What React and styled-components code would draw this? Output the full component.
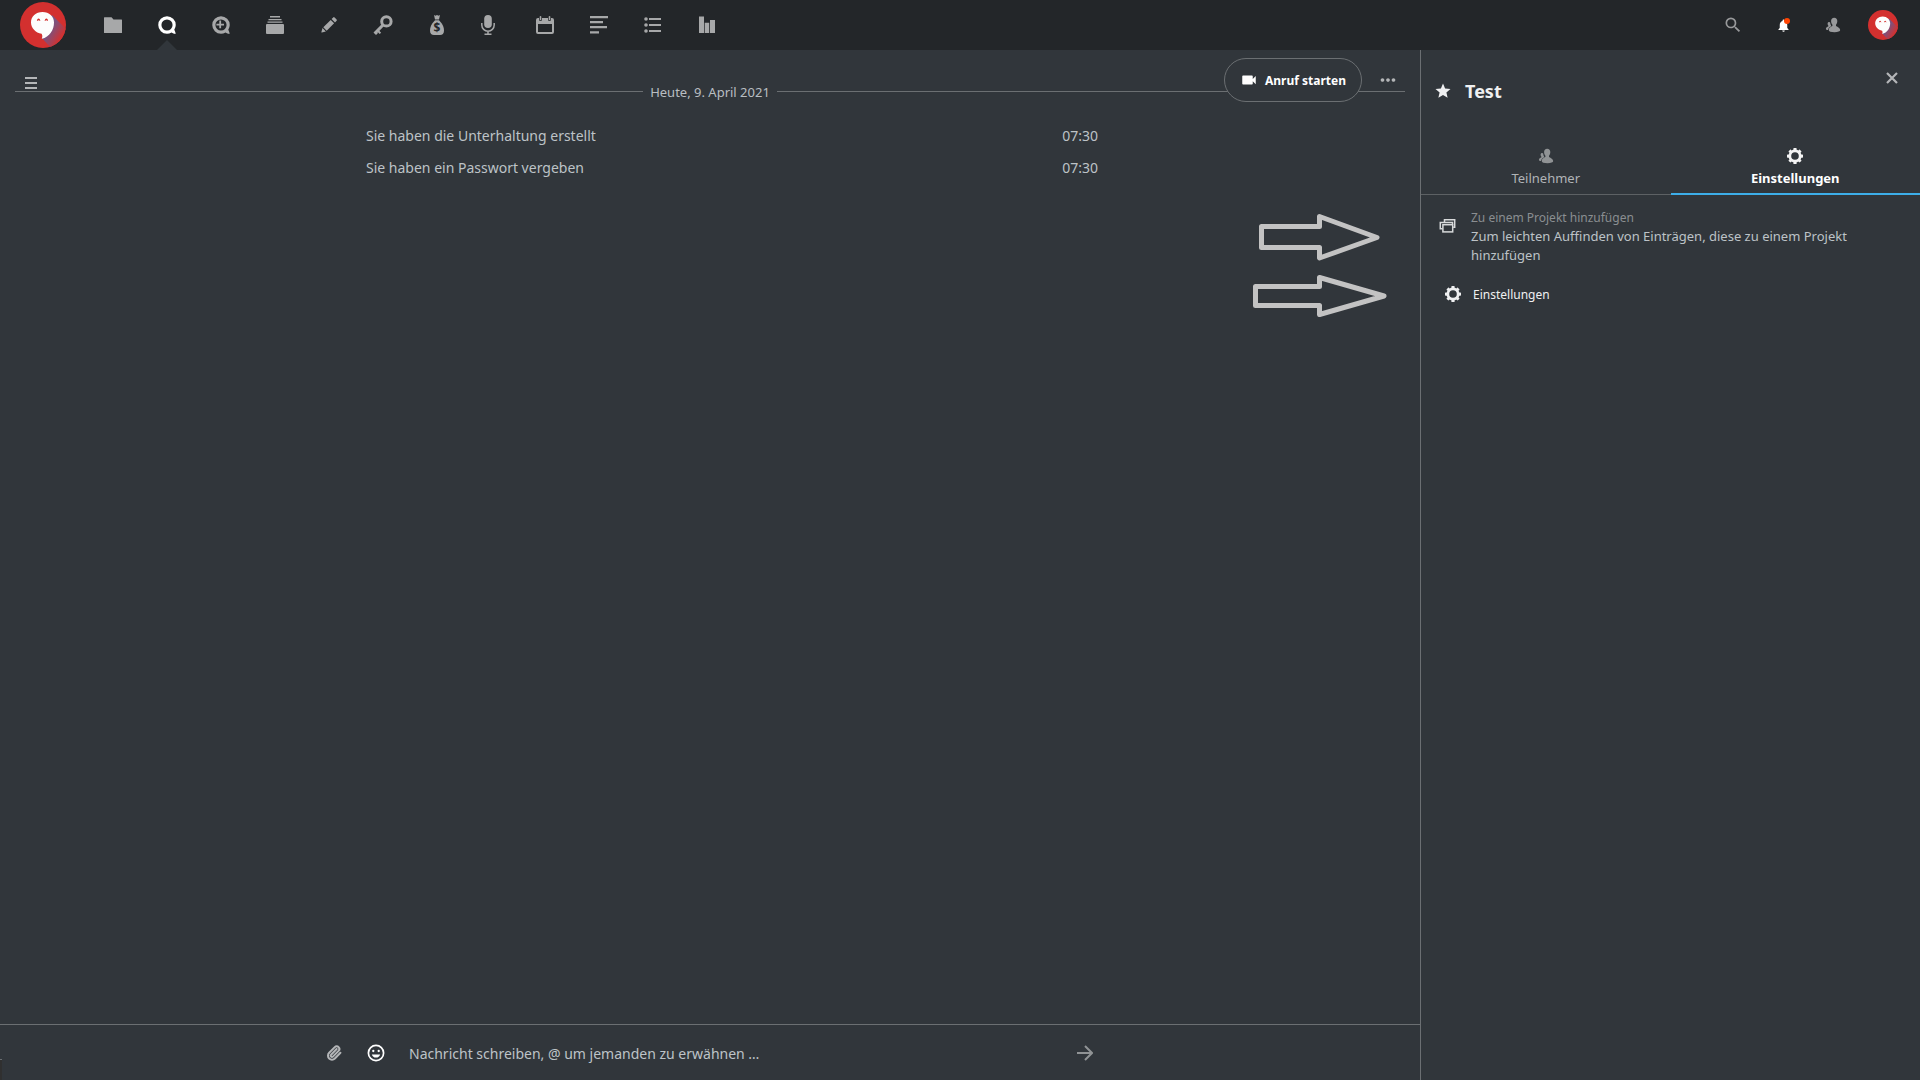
import React from 'react';
import styled, { createGlobalStyle } from 'styled-components';
import {
  MdSearch,
  MdNotifications,
  MdVideocam,
  MdMoreHoriz,
  MdStar
} from 'react-icons/md';
import { Paperclip } from 'lucide-react';

const GlobalStyle = createGlobalStyle`
  * {
    box-sizing: border-box;
  }

  body {
    margin: 0;
    background: #31363b;
    color: #bdc3c7;
    font-family: "Noto Sans", "Open Sans", sans-serif;
    font-size: 14px;
  }

  button, input {
    font-family: inherit;
    color: inherit;
  }
`

const Page = styled.div`
  display: flex;
  flex-direction: column;
  height: 100vh;
`

const Header = styled.header`
  display: flex;
  align-items: center;
  flex-shrink: 0;
  height: 50px;
  padding: 0 12px 0 20px;
  background: #232629;
`

const LogoLink = styled.a`
  display: flex;
  margin-right: 20px;
`

const Nav = styled.nav`
  display: flex;
  flex: 1;
`

const NavLink = styled.a`
  position: relative;
  display: flex;
  align-items: center;
  justify-content: center;
  width: 54px;
  height: 50px;
  color: ${props => props.$active ? '#ffffff' : '#a7a8a9'};

  &::after {
    content: '';
    display: ${props => props.$active ? 'block' : 'none'};
    position: absolute;
    left: 17px;
    bottom: 0;
    border: 10px solid transparent;
    border-top-width: 0;
    border-bottom-color: #31363b;
  }
`

const HeaderButton = styled.button`
  position: relative;
  display: flex;
  align-items: center;
  justify-content: center;
  width: 50px;
  height: 50px;
  padding: 0;
  border: 0;
  background: none;
  color: ${props => props.$bright ? '#ffffff' : '#98999b'};
`

const Badge = styled.span`
  position: absolute;
  top: 18px;
  right: 18px;
  width: 6px;
  height: 6px;
  border-radius: 50%;
  background: #ff4402;
`

const Body = styled.div`
  display: flex;
  flex: 1;
  min-height: 0;
`

const Main = styled.main`
  position: relative;
  display: flex;
  flex-direction: column;
  flex: 1;
  min-width: 0;
`

const TopBar = styled.div`
  position: absolute;
  top: 8px;
  left: 8px;
  right: 10px;
  display: flex;
  align-items: flex-start;
`

const IconButton = styled.button`
  display: flex;
  align-items: center;
  justify-content: center;
  width: 44px;
  height: 44px;
  padding: 0;
  border: 0;
  background: none;
  color: ${props => props.$bright ? '#ffffff' : '#b4b6b8'};
`

const MenuButton = styled(IconButton)`
  width: 46px;
  height: 50px;
  margin-right: auto;
`

const ToolButton = styled(IconButton)`
  width: 42px;
`

const CallButton = styled.button`
  display: flex;
  align-items: center;
  gap: 7px;
  height: 44px;
  margin-right: 4px;
  padding: 0 15px;
  border: 1px solid #6b6f72;
  border-radius: 22px;
  background: #31363b;
  color: #ffffff;
  font-size: 12px;
  font-weight: 700;
  white-space: nowrap;
`

const Messages = styled.div`
  flex: 1;
  padding: 32px 15px 0;
`

const DateDivider = styled.div`
  display: flex;
  gap: 7px;
  margin-bottom: 18px;
  font-size: 13px;
  line-height: 20px;
  color: #b9bec2;

  &::before,
  &::after {
    content: '';
    flex: 1;
    height: 9px;
    border-bottom: 1px solid #6b6f72;
  }
`

const MessageList = styled.ul`
  max-width: 800px;
  margin: 0 auto;
  padding: 0 12px 0 56px;
  list-style: none;
`

const Message = styled.li`
  display: flex;
  justify-content: space-between;
  line-height: 20px;
  padding: 6px 0;
`

const Arrows = styled.svg`
  position: absolute;
  top: 160px;
  right: 30px;
`

const Composer = styled.form`
  flex-shrink: 0;
  height: 56px;
  border-top: 1px solid #6b6f72;
`

const ComposerRow = styled.div`
  display: flex;
  align-items: center;
  max-width: 800px;
  height: 56px;
  margin: 0 auto;
  padding: 0 3px;
`

const MessageInput = styled.input`
  flex: 1;
  height: 44px;
  padding: 0 12px;
  border: 0;
  background: none;
  font-size: 14px;

  &::placeholder {
    color: #bdc3c7;
    opacity: 1;
  }
`

const StatusEdge = styled.span`
  position: absolute;
  left: 0;
  bottom: 0;
  width: 2px;
  height: 21px;
  border-top: 1px solid #6b6f72;
  background: #303030;
`

const Sidebar = styled.aside`
  width: 27vw;
  max-width: 500px;
  border-left: 1px solid #6b6f72;
`

const SidebarHeader = styled.div`
  display: flex;
  height: 84px;
  padding: 6px 6px 0 0;
`

const TitleRow = styled.div`
  display: flex;
  align-items: center;
  flex: 1;
  gap: 13px;
  height: 70px;
  padding-left: 13px;
  color: #eff0f1;
`

const Title = styled.h2`
  margin: 0;
  font-size: 18px;
  line-height: 24px;
`

const Tabs = styled.div`
  display: flex;
  height: 61px;
  border-bottom: 1px solid #5d6164;
`

const Tab = styled.button`
  display: flex;
  flex-direction: column;
  align-items: center;
  flex: 1;
  gap: 4px;
  height: 61px;
  padding: 14px 0 0;
  border: 0;
  border-bottom: 2px solid ${props => props.$active ? '#3daee9' : 'transparent'};
  background: none;
  color: ${props => props.$active ? '#ffffff' : '#b0b4b7'};
  font-size: 13px;
  font-weight: ${props => props.$active ? 700 : 400};
  line-height: 20px;

  svg {
    color: ${props => props.$active ? '#f4f4f4' : '#909395'};
  }
`

const Project = styled.section`
  display: flex;
  gap: 15px;
  padding: 14px 60px 0 18px;
  font-size: 13px;
  line-height: 19px;

  svg {
    flex-shrink: 0;
    margin-top: 9px;
  }
`

const ProjectTitle = styled.div`
  font-size: 12px;
  line-height: 18px;
  color: #8a8e91;
`

const ProjectText = styled.p`
  margin: 0;
`

const SettingsButton = styled.button`
  display: flex;
  align-items: center;
  gap: 12px;
  height: 44px;
  margin: 7px 0 0 24px;
  padding: 0;
  border: 0;
  background: none;
  color: #eff0f1;
  font-size: 12px;
`

const Icon = ({ size = 20, box = 20, children }) => (
  <svg width={size} height={size} viewBox={`0 0 ${box} ${box}`} fill="currentColor" aria-hidden="true">
    {children}
  </svg>
)

const TALK_PATH = 'M8 .999a6.993 6.993 0 0 0-7 6.993 6.993 6.993 0 0 0 7 6.994 6.951 6.951 0 0 0 3.612-1.02c.936.525 2.883 1.4 3.223 1.059.348-.348-.632-2.38-1.007-3.302A6.958 6.958 0 0 0 15 7.992 6.993 6.993 0 0 0 8 .999M8 3.53a4.46 4.46 0 0 1 4.462 4.462A4.46 4.46 0 1 1 8 3.53z'

const GearIcon = () => (
  <Icon size={16} box={16}>
    <path fillRule="evenodd" d="m6.938 0c-.313 0-.563.25-.563.563v1.187c-.625.156-1.156.406-1.688.75l-.812-.813c-.188-.187-.563-.187-.75 0l-1.438 1.438c-.187.187-.187.562 0 .75l.813.812c-.344.532-.594 1.063-.75 1.688h-1.187c-.313 0-.563.25-.563.563v2.124c0 .313.25.563.563.563h1.187c.156.625.406 1.156.75 1.688l-.813.812c-.187.188-.187.563 0 .75l1.438 1.438c.187.187.562.187.75 0l.812-.813c.532.344 1.063.594 1.688.75v1.187c0 .313.25.563.563.563h2.124c.313 0 .563-.25.563-.563v-1.187c.625-.156 1.156-.406 1.688-.75l.812.813c.188.187.563.187.75 0l1.438-1.438c.187-.187.187-.562 0-.75l-.813-.812c.344-.532.594-1.063.75-1.688h1.187c.313 0 .563-.25.563-.563v-2.124c0-.313-.25-.563-.563-.563h-1.187c-.156-.625-.406-1.156-.75-1.688l.813-.812c.187-.188.187-.563 0-.75l-1.438-1.438c-.187-.187-.562-.187-.75 0l-.812.813c-.532-.344-1.063-.594-1.688-.75v-1.187c0-.313-.25-.563-.563-.563zm1.062 4.200a3.800 3.800 0 1 1 0 7.600 3.800 3.800 0 0 1 0-7.600z" />
  </Icon>
)

const ContactsIcon = () => (
  <Icon size={16} box={16}>
    <path d="M9.200.8C7.200.8 6.100 2.200 6.100 4c0 1.600.6 2.900 1.300 3.700V9C5.800 9.600 3.700 10.900 3.700 13c0 1.500 2.300 2.200 5.800 2.200s5.700-.7 5.700-2.100c0-2-2.400-3.200-4.200-4.100V7.700c.7-.8 1.300-2.100 1.300-3.700 0-1.800-1.100-3.200-3.100-3.200z" />
    <path d="M4.200 5c-1 0-1.600.7-1.600 1.700 0 .8.200 1.400.7 1.900v.9C2.200 9.900.9 10.500.9 11.800c0 .8.700 1.200 2 1.300.3-1.800 1.600-3 3.200-3.900V8.600c-.5-.8-.8-1.700-.9-2.900-.2-.5-.5-.7-1-.7z" />
  </Icon>
)

const CollectionIcon = () => (
  <Icon size={17} box={17}>
    <g fill="none" stroke="#d8dadb" strokeWidth="1.500">
      <path d="M5.500 4.500V1.800h10.200v7.500h-1.500" />
      <path d="M3.500 10.700H1.300V4.400h12.200v2" />
      <rect x="3.900" y="6.700" width="9.800" height="7.200" />
    </g>
  </Icon>
)

// white balloon with a long shadow running to the lower right
const Logo = ({ size }) => (
  <svg width={size} height={size} viewBox="0 0 46 46" role="img" aria-label="Logo">
    <defs>
      <linearGradient id={`shadow${size}`} x1="0.2" y1="0.2" x2="0.8" y2="0.7">
        <stop offset="0" stopColor="#6a5c8e" />
        <stop offset="0.4" stopColor="#80507a" />
        <stop offset="1" stopColor="#d3302f" />
      </linearGradient>
      <clipPath id={`round${size}`}>
        <circle cx="23" cy="23" r="23" />
      </clipPath>
    </defs>
    <g clipPath={`url(#round${size})`}>
      <rect width="46" height="46" fill="#d3302f" />
      <path d="M32 13l14 14v19H31l-9-10z" fill={`url(#shadow${size})`} />
      <path d="M22.500 10C15.800 10 11 14.500 11 20.500c0 5.500 4.600 10.300 10.600 11.300.9 1.500 1 3 .2 5C29.500 35 34 28 34 20.500 34 14.500 29.200 10 22.500 10z" fill="#fdfdfd" />
      <path d="M16.900 19c0-1.500.8-2.600 1.700-2.600s1.700 1.100 1.700 2.600l-1.700-.8z" fill="#d3302f" />
      <path d="M24.700 19c0-1.500.8-2.600 1.700-2.600s1.700 1.100 1.700 2.600l-1.700-.8z" fill="#d3302f" />
    </g>
  </svg>
)

const apps = [
  {
    name: 'Dateien',
    icon: <path d="M2 2.300h6.500l2 2.300h8a.5.5 0 0 1 .5.500V17.500a.5.5 0 0 1-.5.500h-17a.5.5 0 0 1-.5-.5V2.800a.5.5 0 0 1 .5-.5z" />
  },
  {
    name: 'Talk',
    active: true,
    icon: <path transform="scale(1.250)" d={TALK_PATH} />
  },
  {
    name: 'Talk erweitert',
    icon: (
      <g>
        <path transform="scale(1.250)" d={TALK_PATH} />
        <path d="M8.300 5.600h1.800v3.100H13v1.800h-2.900v2.700H8.300v-2.700H5.400V8.700h2.900z" />
      </g>
    )
  },
  {
    name: 'Deck',
    icon: (
      <g>
        <path d="M5 1h10v1.500H5zM3.500 4h13v1.300h-13zM2.500 6.500h15v1.300h-15z" />
        <rect x="1" y="9" width="18" height="10" rx="1" />
      </g>
    )
  },
  {
    name: 'Notizen',
    icon: <path d="M14.200 2.400a1 1 0 0 1 1.400 0l2 2a1 1 0 0 1 0 1.400l-1.600 1.600-3.400-3.400zM11.700 4.900l3.400 3.400-7.400 7.400-3.400-3.400zM3.500 13.100l3.400 3.400-4 1.100a.5.5 0 0 1-.5-.6z" />
  },
  {
    name: 'Passwörter',
    icon: (
      <g fill="none" stroke="currentColor">
        <circle cx="13.400" cy="6.400" r="4.700" strokeWidth="3" />
        <path d="M10.200 9.800L1.600 18.600" strokeWidth="3" />
        <path d="M4.400 15.200l3 3.200M2 17l2 2.200" strokeWidth="2" />
      </g>
    )
  },
  {
    name: 'Kosten',
    icon: (
      <g>
        <path d="M7 0l1.500.8L10 0l1.500.8L13 0l-1 4.400H8z" />
        <path d="M8 5.300h4c2.200 2.300 5 5.700 5 10.200 0 3-1.500 4.500-4 4.500H7c-2.500 0-4-1.500-4-4.500C3 11 5.800 7.600 8 5.300z" />
        <text x="10" y="17" textAnchor="middle" fontSize="12" fontWeight="700" fill="#232629">$</text>
      </g>
    )
  },
  {
    name: 'Aufnahme',
    icon: (
      <g>
        <rect x="3.200" y="0" width="7.600" height="13" rx="3.800" />
        <path d="M.8 8v2a6.200 6.200 0 0 0 12.400 0V8M7 16v3.300M3.500 19.300h7" fill="none" stroke="currentColor" strokeWidth="1.500" />
      </g>
    )
  },
  {
    name: 'Kalender',
    icon: (
      <g>
        <path fillRule="evenodd" d="M3 3h1v1.500a1.500 1.500 0 0 0 3 0V3h6v1.500a1.500 1.500 0 0 0 3 0V3h1a2 2 0 0 1 2 2v12a2 2 0 0 1-2 2H3a2 2 0 0 1-2-2V5a2 2 0 0 1 2-2zM3 9v8h14V9z" />
        <rect x="4.700" y="1" width="1.600" height="4.300" rx=".8" />
        <rect x="13.700" y="1" width="1.600" height="4.300" rx=".8" />
      </g>
    )
  },
  {
    name: 'Formulare',
    icon: <path d="M1 1h18v2.200H1zM1 6h13v2.200H1zM1 11h17v2.200H1zM1 16.200h9v2.200H1z" />
  },
  {
    name: 'Aufgaben',
    icon: (
      <g>
        <circle cx="3" cy="4" r="1.800" />
        <circle cx="3" cy="10" r="1.800" />
        <circle cx="3" cy="16" r="1.800" />
        <path d="M6 3h12v2H6zM6 9h12v2H6zM6 15h12v2H6z" />
      </g>
    )
  },
  {
    name: 'Umfragen',
    icon: <path d="M2 1.500h5V18H2zM7.700 7.800h4.500V18H7.700zM13 5h5v13h-5z" />
  }
]

const messages = [
  { text: 'Sie haben die Unterhaltung erstellt', time: '07:30' },
  { text: 'Sie haben ein Passwort vergeben', time: '07:30' }
]

const AppHeader = () => (
  <Header>
    <LogoLink href="#start">
      <Logo size={46} />
    </LogoLink>
    <Nav>
      {apps.map(app => (
        <NavLink key={app.name} href="#app" aria-label={app.name} $active={app.active}>
          <Icon>{app.icon}</Icon>
        </NavLink>
      ))}
    </Nav>
    <HeaderButton aria-label="Suche"><MdSearch size={20} /></HeaderButton>
    <HeaderButton aria-label="Benachrichtigungen" $bright>
      <MdNotifications size={15} />
      <Badge />
    </HeaderButton>
    <HeaderButton aria-label="Kontakte"><ContactsIcon /></HeaderButton>
    <HeaderButton aria-label="Konto"><Logo size={30} /></HeaderButton>
  </Header>
)

const Conversation = () => (
  <Main>
    <Messages>
      <DateDivider>Heute, 9. April 2021</DateDivider>
      <MessageList>
        {messages.map(message => (
          <Message key={message.text}>
            <span>{message.text}</span>
            <time>{message.time}</time>
          </Message>
        ))}
      </MessageList>
    </Messages>
    <TopBar>
      <MenuButton aria-label="Navigation">
        <Icon size={12} box={12}>
          <path d="M0 0h12v2H0zM0 5h12v2H0zM0 10h12v2H0z" />
        </Icon>
      </MenuButton>
      <CallButton>
        <MdVideocam size={18} />
        Anruf starten
      </CallButton>
      <IconButton aria-label="Mehr"><MdMoreHoriz size={22} /></IconButton>
    </TopBar>
    <Arrows width="140" height="110" fill="none" stroke="#c3c3c3" strokeWidth="5" strokeLinejoin="round">
      <path d="M11.500 16.500H69.500V6.500L127 27.500 69.500 48V37.500H11.500z" />
      <path d="M5.500 76.500H69.500V67.500L134 86 69.500 104.500V95.500H5.500z" />
    </Arrows>
    <Composer>
      <ComposerRow>
        <ToolButton type="button" aria-label="Anhang"><Paperclip size={16} strokeWidth={3} /></ToolButton>
        <ToolButton type="button" aria-label="Emoji" $bright>
          <Icon size={18} box={18}>
            <circle cx="9" cy="9" r="7.600" fill="none" stroke="currentColor" strokeWidth="1.700" />
            <circle cx="6.300" cy="7" r="1.150" />
            <circle cx="11.700" cy="7" r="1.150" />
            <path d="M4.800 10.400h8.400a4.400 4.400 0 0 1-8.400 0z" />
          </Icon>
        </ToolButton>
        <MessageInput aria-label="Nachricht" placeholder="Nachricht schreiben, @ um jemanden zu erwähnen …" />
        <IconButton aria-label="Senden">
          <Icon size={16} box={16}>
            <path d="M0 8h14.500M8 1l7 7-7 7" fill="none" stroke="#909395" strokeWidth="2" />
          </Icon>
        </IconButton>
      </ComposerRow>
    </Composer>
    <StatusEdge />
  </Main>
)

const Details = () => (
  <Sidebar>
    <SidebarHeader>
      <TitleRow>
        <MdStar size={18} />
        <Title>Test</Title>
      </TitleRow>
      <IconButton aria-label="Schließen">
        <Icon size={12} box={12}>
          <path d="M1 1l10 10M11 1L1 11" stroke="currentColor" strokeWidth="2.200" />
        </Icon>
      </IconButton>
    </SidebarHeader>
    <Tabs role="tablist">
      <Tab role="tab">
        <ContactsIcon />
        Teilnehmer
      </Tab>
      <Tab role="tab" aria-selected="true" $active>
        <GearIcon />
        Einstellungen
      </Tab>
    </Tabs>
    <Project>
      <CollectionIcon />
      <div>
        <ProjectTitle>Zu einem Projekt hinzufügen</ProjectTitle>
        <ProjectText>Zum leichten Auffinden von Einträgen, diese zu einem Projekt hinzufügen</ProjectText>
      </div>
    </Project>
    <SettingsButton>
      <GearIcon />
      Einstellungen
    </SettingsButton>
  </Sidebar>
)

const App = () => {
  return (
    <Page>
      <GlobalStyle />
      <AppHeader />
      <Body>
        <Conversation />
        <Details />
      </Body>
    </Page>
  )
}

export default App;
